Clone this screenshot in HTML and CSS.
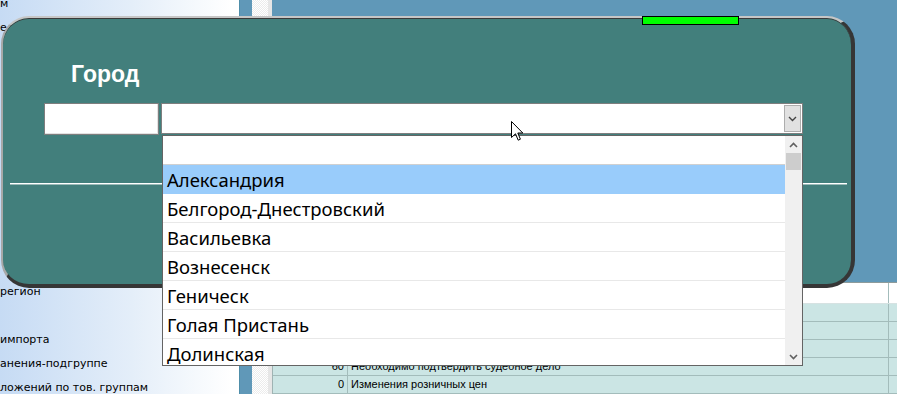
FILE: index.html
```html
<!DOCTYPE html>
<html lang="ru">
<head>
<meta charset="utf-8">
<title>Город</title>
<link rel="stylesheet" href="styles.css">
</head>
<body>
<div class="desk">
  <div class="leftpanel">
    <div class="lrows">
      <div class="lrow">м</div>
      <div class="lrow">е</div>
      <div class="lrow"></div>
      <div class="lrow"></div>
      <div class="lrow"></div>
      <div class="lrow"></div>
      <div class="lrow"></div>
      <div class="lrow"></div>
      <div class="lrow"></div>
      <div class="lrow"></div>
      <div class="lrow"></div>
      <div class="lrow"></div>
      <div class="lrow">регион</div>
      <div class="lrow"></div>
      <div class="lrow">импорта</div>
      <div class="lrow">анения-подгруппе</div>
      <div class="lrow">ложений по тов. группам</div>
    </div>
  </div>
  <div class="strip-blue"></div>
  <div class="strip-check"></div>
  <div class="strip-gray"></div>
  <div class="work">
    <div class="work-top"></div>
    <div class="grid">
      <div class="grow head"><div class="c1"></div><div class="c2"></div><div class="c3"></div></div>
      <div class="grow"><div class="c1"></div><div class="c2"></div><div class="c3"></div></div>
      <div class="grow"><div class="c1"></div><div class="c2"></div><div class="c3"></div></div>
      <div class="grow"><div class="c1"></div><div class="c2"></div><div class="c3"></div></div>
      <div class="grow"><div class="c1">60</div><div class="c2">Необходимо подтвердить судебное дело</div><div class="c3"></div></div>
      <div class="grow"><div class="c1">0</div><div class="c2">Изменения розничных цен</div><div class="c3"></div></div>
    </div>
  </div>
</div>

<div class="dialog">
  <div class="title">Город</div>
  <div class="fields">
    <div class="code"></div>
    <div class="combo">
      <div class="combo-btn">
        <svg width="9" height="6" viewBox="0 0 9 6"><path d="M1 1 L4.5 4.5 L8 1" fill="none" stroke="#444" stroke-width="1.4"/></svg>
      </div>
    </div>
  </div>
  <div class="rule"></div>
</div>

<div class="green"></div>

<div class="list">
  <div class="items">
    <div class="item empty"></div>
    <div class="item sel">Александрия</div>
    <div class="item">Белгород-Днестровский</div>
    <div class="item">Васильевка</div>
    <div class="item">Вознесенск</div>
    <div class="item">Геническ</div>
    <div class="item">Голая Пристань</div>
    <div class="item last">Долинская</div>
  </div>
  <div class="sbar">
    <div class="sarrow">
      <svg width="9" height="6" viewBox="0 0 9 6"><path d="M1 5 L4.5 1.5 L8 5" fill="none" stroke="#606060" stroke-width="1.6"/></svg>
    </div>
    <div class="sthumb"></div>
    <div class="strack"></div>
    <div class="sarrow">
      <svg width="9" height="6" viewBox="0 0 9 6"><path d="M1 1 L4.5 4.5 L8 1" fill="none" stroke="#606060" stroke-width="1.6"/></svg>
    </div>
  </div>
</div>

<svg class="cursor" width="13" height="21" viewBox="0 0 13 21">
  <path d="M0.5 0.5 L0.5 16.5 L4.5 12.8 L7.2 19.2 L9.4 18.2 L6.8 12 L11.8 12 Z" fill="#fff" stroke="#000" stroke-width="1" stroke-linejoin="miter"/>
</svg>
</body>
</html>
```

FILE: styles.css
```css
* { box-sizing: border-box; }

html, body {
  margin: 0;
  padding: 0;
}

body {
  width: 897px;
  height: 394px;
  overflow: hidden;
  position: relative;
  font-family: "DejaVu Sans", "Liberation Sans", sans-serif;
  background: #6098b8;
}

.desk {
  display: flex;
  height: 394px;
}

.leftpanel {
  width: 239px;
  background: linear-gradient(to right, #c6dbf4 0%, #e4eef9 55%, #ffffff 97%);
  overflow: hidden;
  font-size: 11px;
  color: #000;
}

.lrows {
  margin-top: -8px;
}

.lrow {
  height: 24px;
  line-height: 24px;
  white-space: nowrap;
  padding-left: 0;
}

.strip-blue {
  width: 13px;
  background: #6098b8;
  border-left: 1px solid #4f8eaa;
}

.strip-check {
  width: 16px;
  background: repeating-conic-gradient(#ececec 0 25%, #ffffff 0 50%) 0 0 / 2px 2px;
}

.strip-gray {
  width: 4px;
  background: #e6e6e6;
}

.work {
  flex: 1;
  display: flex;
  flex-direction: column;
}

.work-top {
  height: 283px;
  background: #6098b8;
  border-bottom: 1px solid #8d9b9b;
}

.grid {
  flex: 1;
  background: #ffffff;
  border-left: 1px solid #9fb3b3;
  font-family: "Liberation Sans", Arial, sans-serif;
  font-size: 11px;
  color: #000;
}

.grow {
  display: flex;
  height: 18px;
  line-height: 17px;
  background: #cbe5e4;
  border-bottom: 1px solid #a3bcbb;
  white-space: nowrap;
}

.grow.head {
  height: 21px;
  background: #ffffff;
  border-bottom: 1px solid #d6e2e2;
}

.c1 {
  width: 75px;
  border-right: 1px solid #a3bcbb;
  text-align: right;
  padding-right: 3px;
}

.c2 {
  width: 541px;
  border-right: 1px solid #a3bcbb;
  padding-left: 3px;
  overflow: hidden;
}

.c3 {
  flex: 1;
}

/* dialog window */
.dialog {
  position: absolute;
  left: 1px;
  top: 16px;
  width: 854px;
  height: 272px;
  background: #427f7c;
  border-radius: 28px;
  border-top: 2px solid #c6c6c6;
  border-left: 2px solid #a8a8a8;
  border-right: 4px solid #363636;
  border-bottom: 4px solid #363636;
  box-shadow: inset 0 1px 0 #3a3a3a;
  display: flex;
  flex-direction: column;
}

.title {
  margin: 43px 0 0 68px;
  font-family: "Liberation Sans", Arial, sans-serif;
  font-weight: bold;
  font-size: 23px;
  line-height: 27px;
  color: #ffffff;
}

.fields {
  display: flex;
  gap: 2px;
  margin: 15px 0 0 41px;
}

.code {
  width: 115px;
  height: 32px;
  background: #ffffff;
  border: 1px solid #7e7e7e;
  box-shadow: inset -1px -1px 0 #e2e2e2;
}

.combo {
  width: 642px;
  height: 31px;
  background: #ffffff;
  border: 1px solid #7e7e7e;
  display: flex;
  justify-content: flex-end;
  padding: 1px 1px 1px 0;
}

.combo-btn {
  width: 17px;
  height: 27px;
  background: #e1e1e1;
  border: 1px solid #adadad;
  display: flex;
  align-items: center;
  justify-content: center;
}

.rule {
  margin: 48px 4px 0 7px;
  height: 2px;
  background: #ffffff;
  border-bottom: 1px solid #9cbab8;
}

.green {
  position: absolute;
  left: 642px;
  top: 16px;
  width: 97px;
  height: 9px;
  background: #00ff00;
  border: 1px solid #000;
}

/* dropdown popup */
.list {
  position: absolute;
  left: 162px;
  top: 135px;
  width: 641px;
  height: 231px;
  background: #ffffff;
  border: 1px solid #646464;
  display: flex;
}

.items {
  flex: 1;
  font-family: "Noto Sans", "Open Sans", sans-serif;
  font-size: 18.5px;
  color: #000;
}

.item {
  height: 29px;
  line-height: 26px;
  padding: 2px 0 0 4px;
  border-bottom: 1px solid #e8e8e8;
  white-space: nowrap;
}

.item.empty {
  height: 29px;
  border-bottom: 1px solid #d0d0d0;
}

.item.sel {
  background: #99ccfb;
  border-bottom-color: #99ccfb;
}

.item.last {
  border-bottom: none;
}

.sbar {
  width: 17px;
  background: #f0f0f0;
  display: flex;
  flex-direction: column;
}

.sarrow {
  height: 17px;
  display: flex;
  align-items: center;
  justify-content: center;
}

.sthumb {
  height: 17px;
  margin: 0 1px;
  background: #cdcdcd;
}

.strack {
  flex: 1;
}

.cursor {
  position: absolute;
  left: 511px;
  top: 121px;
}
```
